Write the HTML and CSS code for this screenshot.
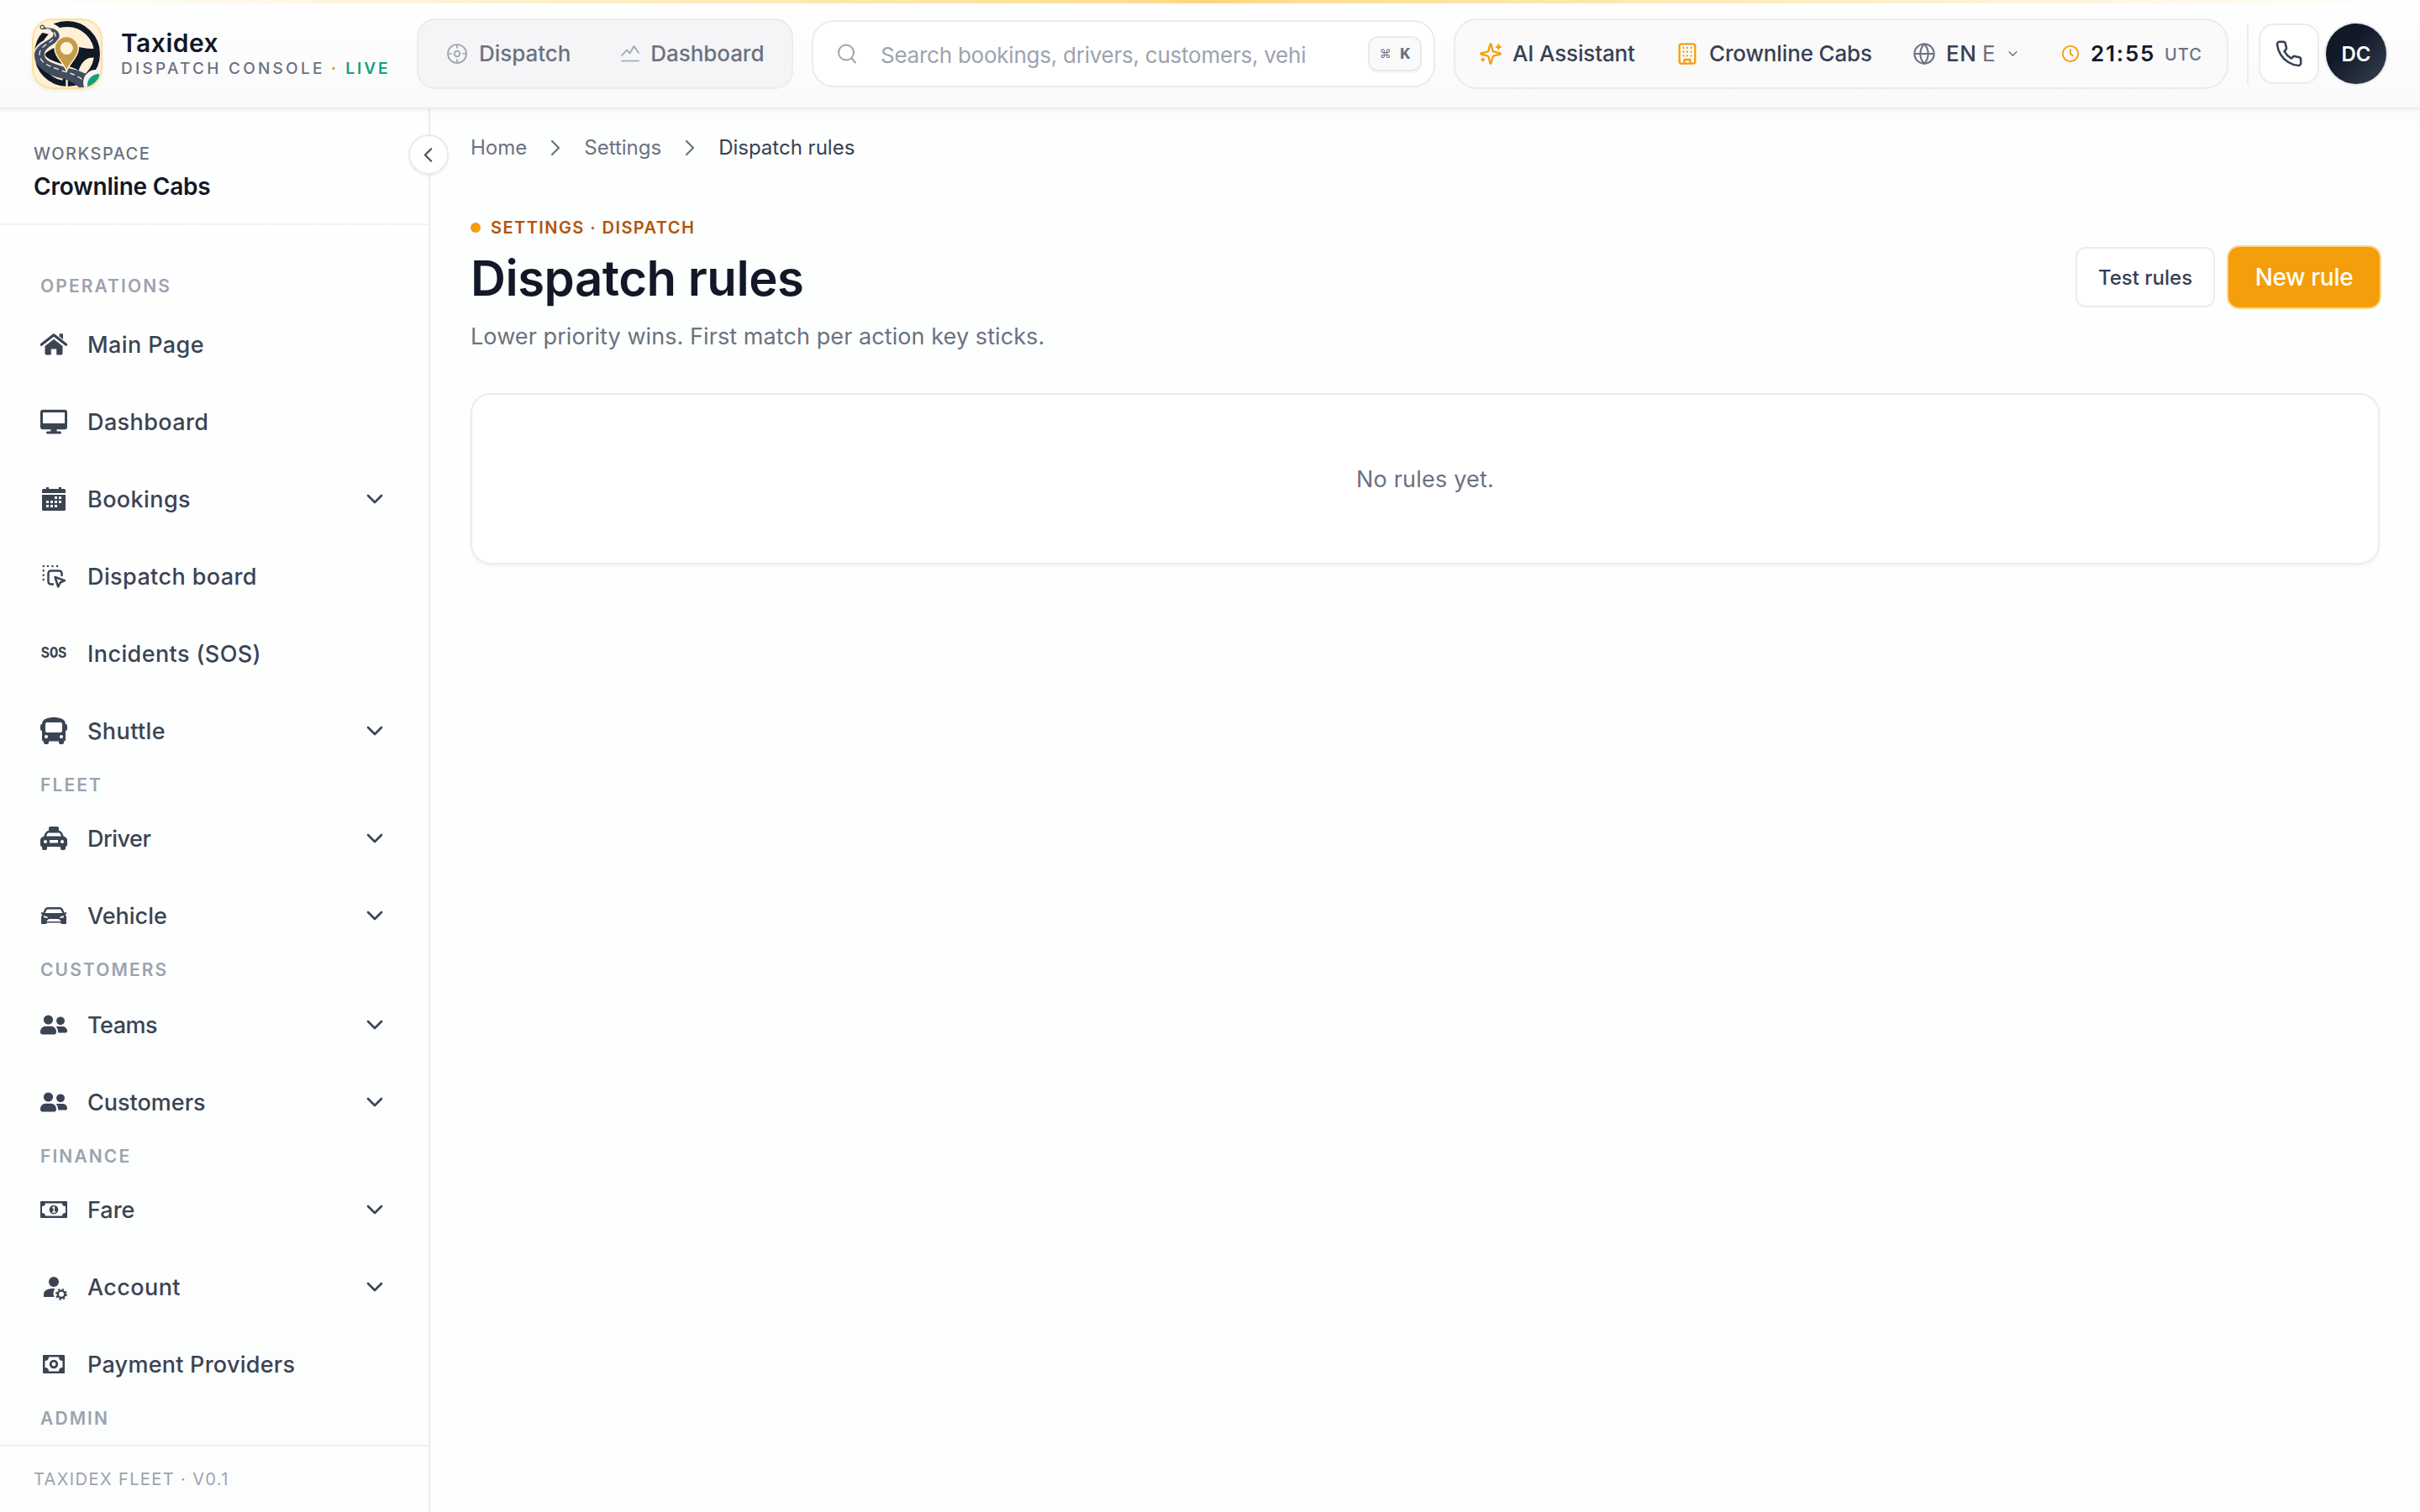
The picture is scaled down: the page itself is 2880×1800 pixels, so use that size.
FILE: index.html
```
<!DOCTYPE html>
<html lang="en">
<head>
<meta charset="utf-8">
<title>Dispatch rules · Taxidex</title>
<link rel="stylesheet" href="styles.css">
</head>
<body>
<svg class="defs" width="0" height="0" aria-hidden="true">
  <symbol id="chev-down" viewBox="0 0 20 12"><path d="M2 2l8 8 8-8" fill="none" stroke="currentColor" stroke-width="2.6" stroke-linecap="round" stroke-linejoin="round"/></symbol>
  <symbol id="chev-right" viewBox="0 0 12 20"><path d="M2 2l8 8-8 8" fill="none" stroke="currentColor" stroke-width="2.2" stroke-linecap="round" stroke-linejoin="round"/></symbol>
  <symbol id="people" viewBox="0 0 32 32"><circle cx="9.5" cy="10" r="5.6"/><circle cx="24" cy="11.3" r="4.9"/><path d="M0 24.5C0 20 3 17.7 6.5 17.7h6c3.500 0 6.500 2.300 6.500 6.800 0 2-1 2.900-2.500 2.900h-14C1 27.400 0 26.500 0 24.500zM18.500 18h8c3.500 0 5.500 2.500 5.500 5.500 0 1.200-.6 2-1.800 2H21.200c0-3-.8-5.500-2.700-7.500z"/></symbol>
</svg>

<header class="topbar">
  <div class="brand">
    <svg class="logo" viewBox="0 0 84 84">
      <defs><clipPath id="logo-clip"><rect x="1" y="1" width="82" height="82" rx="23"/></clipPath></defs>
      <rect x="1" y="1" width="82" height="82" rx="23" fill="#fff1d8"/>
      <g clip-path="url(#logo-clip)">
        <circle cx="42" cy="42" r="35.5" fill="none" stroke="#111927" stroke-width="7"/>
        <path fill="#111927" d="M7 38c9-3 18-4 24-3l22-1c8 0 15 4 27 1v12c-7-1-12-1-16 2-5 4-8 9-9 17H30c-1-9-5-16-23-18z"/>
        <path fill="#111927" d="M33 58h17l-2 21H36c2-7 0-13-3-21z"/>
        <path d="M41.500 60v22" stroke="#fff1d8" stroke-width="2.400"/>
        <path d="M12 10c12 2 19 5 18 12-1 8-20 9-21 20-1 13 20 17 32 21 10 3 18 8 24 17" fill="none" stroke="#fff1d8" stroke-width="13.500"/>
        <path d="M11 10L25 12c10 3 10 13 1 18-6 4-12 8-11 14 1 8 15 11 28 15 15 3 25 8 34 14l-18 12C52 77 43 73 34 71 17 67 4 57 3 45 2 31 21 27 25 21 28 16 21 13 11 12z" fill="#424c5c"/>
        <path d="M17 12.500c7 1 11 4 11 8-1 7-18 11-19 21-1 13 17 17 31 22 8 2 15 5 21 10" fill="none" stroke="#f4f4f4" stroke-width="1.300" stroke-dasharray="6 4"/>
        <circle cx="12.300" cy="10.300" r="2.200" fill="#fff1d8" stroke="#424c5c" stroke-width="1.200"/>
        <path fill="#c59c49" stroke="#fff1d8" stroke-width="1.500" d="M41.300 62.500C38 53 27 46 27 35.700a14.200 14.200 0 0 1 28.400 0C55.400 46 44.500 53 41.300 62.500z"/>
        <circle cx="41.300" cy="35.500" r="7.500" fill="#fff3de"/>
        <circle cx="76" cy="76" r="15" fill="#f3f4f6"/>
        <path fill="#12a375" d="M66 81c-1-8 5-15 14-15 1 8-5 15-14 15z"/>
      </g>
      <rect x="1" y="1" width="82" height="82" rx="23" fill="none" stroke="#fde09a" stroke-width="2"/>
    </svg>
    <div class="brand-text">
      <div class="brand-name">Taxidex</div>
      <div class="brand-sub">DISPATCH CONSOLE<span class="brand-dot">·</span><span class="brand-live">LIVE</span></div>
    </div>
  </div>

  <nav class="modes">
    <a class="mode mode-dispatch"><svg width="26" height="26" viewBox="0 0 26 26" fill="none" stroke="currentColor" stroke-width="1.700"><circle cx="13" cy="13" r="11"/><circle cx="13" cy="13" r="3.300"/><path d="M13 2v4.500M13 19.500V24M2 13h4.500M19.500 13H24"/></svg><span>Dispatch</span></a>
    <a class="mode"><svg width="22" height="22" viewBox="0 0 22 22" fill="none" stroke="currentColor" stroke-width="1.700" stroke-linecap="round" stroke-linejoin="round"><path d="M1 13l6-6.500 3.500 4L15.500 2 21 10M1 19.500h20"/></svg><span>Dashboard</span></a>
  </nav>

  <div class="search">
    <svg width="24" height="26" viewBox="0 0 24 26" fill="none" stroke="#9ca3af" stroke-width="2" stroke-linecap="round"><circle cx="11" cy="11.500" r="9"/><path d="M17.500 18.500l4.500 5"/></svg>
    <span class="placeholder">Search bookings, drivers, customers, vehi</span>
    <kbd class="keys"><span class="cmd">⌘</span><span>K</span></kbd>
  </div>

  <div class="tools">
    <a class="tool tool-ai"><svg class="amber" width="28" height="28" viewBox="0 0 24 24" fill="none" stroke="currentColor" stroke-width="2" stroke-linecap="round" stroke-linejoin="round"><path d="M9.937 15.500A2 2 0 0 0 8.500 14.063l-6.135-1.582a.5.5 0 0 1 0-.962L8.500 9.936A2 2 0 0 0 9.937 8.500l1.582-6.135a.5.5 0 0 1 .963 0L14.063 8.500A2 2 0 0 0 15.500 9.937l6.135 1.581a.5.5 0 0 1 0 .964L15.500 14.063a2 2 0 0 0-1.437 1.437l-1.582 6.135a.5.5 0 0 1-.963 0zM20 3v4M22 5h-4M4 17v2M5 18H3"/></svg><span>AI Assistant</span></a>
    <a class="tool tool-company"><svg class="amber" width="28" height="28" viewBox="0 0 24 24" fill="none" stroke="currentColor" stroke-width="2" stroke-linecap="round" stroke-linejoin="round"><rect x="4" y="2" width="16" height="20" rx="2"/><path d="M9 22v-4h6v4M8 6h.01M16 6h.01M12 6h.01M12 10h.01M12 14h.01M16 10h.01M16 14h.01M8 10h.01M8 14h.01"/></svg><span>Crownline Cabs</span></a>
    <a class="tool tool-lang"><svg class="grey" width="28" height="28" viewBox="0 0 24 24" fill="none" stroke="currentColor" stroke-width="1.800"><circle cx="12" cy="12" r="10"/><path d="M12 2a14.500 14.500 0 0 0 0 20 14.500 14.500 0 0 0 0-20M2 12h20"/></svg><span class="lang">EN</span><span class="lang-alt">E</span><svg class="tiny" width="11" height="8" viewBox="0 0 20 12"><use href="#chev-down"/></svg></a>
    <div class="tool tool-clock"><svg class="amber" width="22" height="22" viewBox="0 0 24 24" fill="none" stroke="currentColor" stroke-width="2" stroke-linecap="round"><circle cx="12" cy="12" r="10"/><path d="M12 6.500V12l3 2.500"/></svg><span class="time">21:55</span><span class="utc">UTC</span></div>
  </div>

  <div class="user">
    <a class="phone"><svg width="34" height="34" viewBox="0 0 24 24" fill="none" stroke="currentColor" stroke-width="1.800" stroke-linecap="round" stroke-linejoin="round"><path d="M22 16.920v3a2 2 0 0 1-2.180 2 19.790 19.790 0 0 1-8.630-3.070 19.500 19.500 0 0 1-6-6 19.790 19.790 0 0 1-3.070-8.670A2 2 0 0 1 4.110 2h3a2 2 0 0 1 2 1.720 12.840 12.840 0 0 0 .7 2.810 2 2 0 0 1-.45 2.110L8.090 9.910a16 16 0 0 0 6 6l1.270-1.270a2 2 0 0 1 2.110-.45 12.840 12.840 0 0 0 2.810.7A2 2 0 0 1 22 16.920z"/></svg></a>
    <div class="avatar">DC</div>
  </div>
</header>

<div class="shell">
  <aside class="sidebar">
    <div class="workspace">
      <div class="workspace-label">WORKSPACE</div>
      <div class="workspace-name">Crownline Cabs</div>
    </div>
    <nav class="menu">
      <div class="group group-first">OPERATIONS</div>
      <a class="item"><svg viewBox="0 0 32 32"><path d="M22.700 3.300H27V10l-4.300-3.600z"/><path d="M1.300 16.300L16 4.800l14.700 11.500" fill="none" stroke="currentColor" stroke-width="3.200" stroke-linecap="round" stroke-linejoin="round"/><path d="M5.500 18L16 9.800 26.500 18v8.800q0 1.700-1.700 1.700h-5.600v-7h-6.400v7H7.200q-1.700 0-1.700-1.700z"/></svg><span>Main Page</span></a>
      <a class="item"><svg viewBox="0 0 32 32"><path fill-rule="evenodd" d="M3 1.700h26a3 3 0 0 1 3 3v17.600a3 3 0 0 1-3 3H19.500v2.200h4a1.500 1.500 0 0 1 0 3h-15a1.500 1.500 0 0 1 0-3h4v-2.200H3a3 3 0 0 1-3-3V4.700a3 3 0 0 1 3-3zM3 5v13h26V5z"/></svg><span>Dashboard</span></a>
      <a class="item"><svg viewBox="0 0 32 32"><path fill-rule="evenodd" d="M2 5.500Q2 4 3.500 4H7V2h3v2h12V2h3v2h3.500Q30 4 30 5.500V9H2zM2 11h28v17.500q0 1.500-1.500 1.500h-25Q2 30 2 28.500zM17 13v3h3v-3zm5 0v3h3v-3zM7 18v3h3v-3zm5 0v3h3v-3zm5 0v3h3v-3zm5 0v3h3v-3zM7 23v3h3v-3zm5 0v3h3v-3zm5 0v3h3v-3z"/></svg><span>Bookings</span><svg class="caret"><use href="#chev-down"/></svg></a>
      <a class="item"><svg viewBox="0 0 32 32"><g fill="none" stroke="currentColor" stroke-width="2.500" stroke-linecap="round" stroke-linejoin="round"><path d="M3.700 4h.01M9 4h.01M14.500 4h.01M20 4h.01M3.700 9.300h.01M3.700 14.700h.01M3.700 20h.01"/><path d="M15 25.500h-2.500a3 3 0 0 1-3-3V12.500a3 3 0 0 1 3-3H22.500a3 3 0 0 1 3 3V15"/><path d="M17.500 17l11.500 4.200-5.200 2.300-2.600 5z"/></g></svg><span>Dispatch board</span></a>
      <a class="item"><b class="sos">SOS</b><span>Incidents (SOS)</span></a>
      <a class="item"><svg viewBox="0 0 32 32"><path fill-rule="evenodd" d="M2 8C2 2 9 0 16 0s14 2 14 8a2 2 0 0 1 2 2v4a2 2 0 0 1-2 2v11q0 1-2 1.500V30a2 2 0 0 1-2 2h-2a2 2 0 0 1-2-2v-1.500H10V30a2 2 0 0 1-2 2H6a2 2 0 0 1-2-2v-1.500Q2 28 2 27V16a2 2 0 0 1-2-2v-4a2 2 0 0 1 2-2zM8 6a2 2 0 0 0-2 2v8a2 2 0 0 0 2 2h16a2 2 0 0 0 2-2V8a2 2 0 0 0-2-2zM7 21a2 2 0 1 0 .01 0zM25 21a2 2 0 1 0 .01 0z"/></svg><span>Shuttle</span><svg class="caret"><use href="#chev-down"/></svg></a>
      <div class="group">FLEET</div>
      <a class="item item-tight"><svg viewBox="0 0 32 32"><path fill-rule="evenodd" d="M10 4a2 2 0 0 1 2-2h8a2 2 0 0 1 2 2v3c3 0 4 2 6 7 2 0 4 2 4 4v6q0 1.500-2 2v2a2 2 0 0 1-2 2h-2a2 2 0 0 1-2-2v-2H8v2a2 2 0 0 1-2 2H4a2 2 0 0 1-2-2v-2q-2-.5-2-2v-6c0-2 2-4 4-4 2-5 3-7 6-7zM9.500 9.500Q8.500 9.500 7 13.500h18q-1.500-4-2.500-4zM6 18a2 2 0 1 0 .01 0zM26 18a2 2 0 1 0 .01 0zM11 18v3.500h10V18z"/></svg><span>Driver</span><svg class="caret"><use href="#chev-down"/></svg></a>
      <a class="item item-snug"><svg viewBox="0 0 32 32"><path fill-rule="evenodd" d="M3.500 12.500C5 8 6 6 9.500 6h13C26 6 27 8 28.500 12.500l2.500-.5v2l-1.500 1q1.500 1 1.500 3v7q0 1-1 1h-5l-1-1.500H8L7 26H2q-1 0-1-1v-7q0-2 1.500-3L1 14v-2zM8 8.500L5.500 13h21L24 8.500zM4 16.300v2l5 .7q0-2-2-2.300zM28 16.300v2l-5 .7q0-2 2-2.300zM10 20l-3 3h18l-3-3z"/></svg><span>Vehicle</span><svg class="caret"><use href="#chev-down"/></svg></a>
      <div class="group group-loose">CUSTOMERS</div>
      <a class="item item-tight"><svg viewBox="0 0 32 32"><use href="#people"/></svg><span>Teams</span><svg class="caret"><use href="#chev-down"/></svg></a>
      <a class="item item-snug"><svg viewBox="0 0 32 32"><use href="#people"/></svg><span>Customers</span><svg class="caret"><use href="#chev-down"/></svg></a>
      <div class="group">FINANCE</div>
      <a class="item item-snug"><svg viewBox="0 0 32 32"><path fill-rule="evenodd" d="M1 6h30q1 0 1 1v18q0 1-1 1H1q-1 0-1-1V7q0-1 1-1zM6 8.500Q6 12 2 12v8q4 0 4 3.500h20Q26 20 30 20v-8q-4 0-4-3.500z"/><circle cx="16" cy="16" r="5.300"/><path d="M14.300 14l2-1v5.500M14 19h4.500" fill="none" stroke="#fff" stroke-width="1.500"/></svg><span>Fare</span><svg class="caret"><use href="#chev-down"/></svg></a>
      <a class="item"><svg viewBox="0 0 32 32"><circle cx="16" cy="10" r="6"/><path d="M4 28v-3c0-4.500 4.500-7 11-7h2.500a10 10 0 0 0-1 10z"/><circle cx="25" cy="24.800" r="4.200" fill="none" stroke="currentColor" stroke-width="2.400"/><circle cx="25" cy="24.800" r="6" fill="none" stroke="currentColor" stroke-width="1.900" stroke-dasharray="2.300 2.410"/></svg><span>Account</span><svg class="caret"><use href="#chev-down"/></svg></a>
      <a class="item item-wide"><svg viewBox="0 0 32 32"><path fill-rule="evenodd" d="M4 5h24q1 0 1 1v20q0 1-1 1H4q-1 0-1-1V6q0-1 1-1zM10 7.500Q10 12 5.500 12v8q4.500 0 4.500 4.500h12Q22 20 26.500 20v-8Q22 12 22 7.500z"/><circle cx="16" cy="16" r="3.800" fill="none" stroke="currentColor" stroke-width="2.800"/></svg><span>Payment Providers</span></a>
      <div class="group">ADMIN</div>
    </nav>
    <div class="sidebar-foot">TAXIDEX FLEET · V0.1</div>
    <button class="collapse"><svg width="11" height="19" viewBox="0 0 12 20"><path d="M10 2l-8 8 8 8" fill="none" stroke="currentColor" stroke-width="2.400" stroke-linecap="round" stroke-linejoin="round"/></svg></button>
  </aside>

  <main class="main">
    <div class="crumbs"><a>Home</a><svg><use href="#chev-right"/></svg><a>Settings</a><svg><use href="#chev-right"/></svg><span class="here">Dispatch rules</span></div>
    <div class="head">
      <div>
        <div class="eyebrow"><i class="dot"></i>SETTINGS · DISPATCH</div>
        <h1>Dispatch rules</h1>
        <p class="lede">Lower priority wins. First match per action key sticks.</p>
      </div>
      <div class="actions">
        <button class="btn">Test rules</button>
        <button class="btn btn-primary">New rule</button>
      </div>
    </div>
    <section class="card">No rules yet.</section>
  </main>
</div>
</body>
</html>
```
FILE: styles.css
```
* { box-sizing: border-box; }

body {
  margin: 0;
  width: 2880px;
  height: 1800px;
  overflow: hidden;
  display: flex;
  flex-direction: column;
  background: #fdfefe;
  color: #111827;
  font-family: Inter, "Noto Sans", sans-serif;
}

button { font-family: inherit; margin: 0; padding: 0; }
svg { flex: none; display: block; }
.defs { position: absolute; }

/* Top bar */
.topbar {
  position: relative;
  z-index: 2;
  flex: none;
  display: flex;
  align-items: center;
  height: 130px;
  padding-left: 38px;
  border-bottom: 2px solid #ebecef;
  background: linear-gradient(#fff, #fafafb);
  box-shadow: 0 2px 3px rgba(17, 24, 39, .04), 0 8px 24px rgba(17, 24, 39, .02);
}
.topbar::before {
  content: "";
  position: absolute;
  inset: 0 0 auto;
  height: 4px;
  background: linear-gradient(90deg, rgba(251, 191, 36, 0), #fddf94 46%, #fbd482 50%, #fddf94 54%, rgba(251, 191, 36, 0));
}
.brand { display: flex; align-items: center; width: 458px; }
.logo { width: 84px; height: 84px; margin-right: 22px; border-radius: 24px; box-shadow: 0 2px 4px rgba(17, 24, 39, .06); }
.brand-text { padding-top: 4px; white-space: nowrap; }
.brand-name { font-size: 30px; font-weight: 600; line-height: 32px; letter-spacing: .5px; }
.brand-sub { font-size: 19px; font-weight: 500; line-height: 30px; letter-spacing: 3.25px; color: #6b7280; }
.brand-dot { color: #f59e0b; font-weight: 700; margin: 0 8px 0 7px; }
.brand-live { color: #12a375; font-weight: 600; letter-spacing: 3px; }

.modes {
  display: flex;
  align-items: center;
  width: 448px;
  height: 84px;
  margin-right: 22px;
  padding-left: 33px;
  gap: 60px;
  border: 2px solid #ececef;
  border-radius: 22px;
  background: #f5f5f8;
}
.mode { display: flex; align-items: center; gap: 13px; font-size: 26px; font-weight: 500; letter-spacing: -.05px; color: #6b7280; }
.mode svg { color: #9ca3af; }
.mode span, .tool-ai span, .tool-company span, .lang, .lang-alt { padding-bottom: 2px; }

.search {
  display: flex;
  align-items: center;
  width: 742px;
  height: 80px;
  margin-right: 22px;
  padding: 0 14px 0 28px;
  border: 2px solid #ececee;
  border-radius: 26px;
  background: #fff;
}
.placeholder { margin-left: 28px; padding-top: 2px; font-size: 26px; letter-spacing: -.24px; color: #9ca3af; white-space: nowrap; }
.keys {
  display: flex;
  align-items: center;
  justify-content: center;
  gap: 10px;
  width: 64px;
  height: 42px;
  margin-left: auto;
  border: 2px solid #e9eaed;
  border-radius: 12px;
  background: #fafafa;
  box-shadow: 0 2px 1px rgba(17, 24, 39, .04);
  color: #6b7280;
  font: 700 21px "Liberation Mono", monospace;
}
.cmd { font-family: "DejaVu Sans", sans-serif; font-weight: 400; font-size: 14px; }

.tools {
  display: flex;
  align-items: center;
  width: 922px;
  height: 84px;
  padding-left: 28px;
  border: 2px solid #ececee;
  border-radius: 28px;
  background: #fafafb;
}
.tool { display: flex; align-items: center; font-size: 26px; font-weight: 500; color: #374151; white-space: nowrap; }
.tool-ai { width: 234px; gap: 12px; letter-spacing: -.15px; }
.tool-company { width: 282px; gap: 12px; letter-spacing: -.15px; }
.tool-lang { width: 177px; }
.lang { margin-left: 12px; width: 43px; letter-spacing: .5px; }
.lang-alt { color: #6b7280; font-weight: 400; width: 31px; }
.tiny { color: #6b7280; }
.amber { color: #f59e0b; }
.grey { color: #6b7280; }
.time { margin-left: 13px; width: 88px; padding-bottom: 1px; font-weight: 600; letter-spacing: 1.8px; color: #111827; }
.utc { padding-top: 2px; font-size: 20px; letter-spacing: 1px; color: #6b7280; }

.user {
  display: flex;
  align-items: center;
  gap: 8px;
  height: 72px;
  margin-left: 22px;
  padding-left: 12px;
  border-left: 2px solid #ebecee;
}
.phone {
  display: flex;
  align-items: center;
  justify-content: center;
  width: 72px;
  height: 72px;
  border: 2px solid #ececee;
  border-radius: 18px;
  background: #fff;
  color: #374151;
}
.avatar {
  display: flex;
  align-items: center;
  justify-content: center;
  width: 72px;
  height: 72px;
  border-radius: 50%;
  background: linear-gradient(135deg, #111827 35%, #374151);
  box-shadow: 0 0 0 2px #e9eaec;
  color: #fff;
  font-size: 24px;
  font-weight: 600;
}

/* Sidebar */
.shell { flex: 1; display: flex; min-height: 0; }
.sidebar {
  position: relative;
  display: flex;
  flex-direction: column;
  width: 512px;
  border-right: 2px solid #ebebed;
  background: linear-gradient(#fff, #fcfdfd);
}
.workspace { flex: none; height: 138px; padding: 38px 0 0 40px; border-bottom: 2px solid #f3f4f6; }
.workspace-label { font-size: 20px; font-weight: 500; line-height: 30px; letter-spacing: 1.45px; color: #6b7280; }
.workspace-name { margin-top: 4px; font-size: 28px; font-weight: 600; line-height: 40px; letter-spacing: -.2px; }
.collapse {
  position: absolute;
  top: 30px;
  right: -24px;
  display: flex;
  align-items: center;
  justify-content: center;
  width: 48px;
  height: 48px;
  padding-right: 2px;
  border: 2px solid #e9eaec;
  border-radius: 50%;
  background: #fff;
  box-shadow: 0 2px 3px rgba(17, 24, 39, .05);
  color: #4b5563;
}
.menu { flex: 1; min-height: 0; overflow: hidden; padding: 54px 54px 0 48px; }
.group { height: 36px; line-height: 38px; font-size: 21px; font-weight: 600; letter-spacing: 2.1px; color: #9ca3af; }
.group-first { height: 42px; }
.group-loose { height: 38px; }
.item { display: flex; align-items: center; height: 92px; font-size: 27px; font-weight: 500; letter-spacing: .4px; color: #3b4453; }
.item > svg { width: 32px; height: 32px; fill: currentColor; }
.item span { margin-left: 24px; }
.item-tight { letter-spacing: -.5px; }
.item-snug { letter-spacing: 0; }
.item-wide { letter-spacing: .25px; }
.item > .caret { width: 20px; height: 12px; margin-left: auto; fill: none; }
.sos { width: 32px; text-align: center; font: 700 17px/24px "Liberation Mono", monospace; letter-spacing: 0; transform: scaleY(1.18); }
.sidebar-foot { flex: none; height: 80px; padding-left: 40px; border-top: 2px solid #f0f1f3; font-size: 20px; line-height: 79px; letter-spacing: 1.4px; color: #9ca3af; }

/* Page */
.main { flex: 1; display: flex; flex-direction: column; padding: 30px 48px 0; }
.crumbs { display: flex; align-items: center; height: 31px; margin-bottom: 1px; font-size: 24px; color: #6b7280; }
.crumbs svg { width: 12px; height: 20px; margin: 0 28px; }
.here { color: #374151; }
.head { display: flex; justify-content: space-between; align-items: center; height: 228px; margin: 30px -2px 0 0; }
.eyebrow { display: flex; align-items: center; height: 36px; margin-top: 3px; font-size: 20px; font-weight: 600; letter-spacing: 1.44px; color: #b45309; }
.dot { width: 12px; height: 12px; margin-right: 12px; border-radius: 50%; background: #f59e0b; }
h1 { margin: 6px 0 0; font-size: 58px; font-weight: 600; line-height: 72px; letter-spacing: -.45px; }
.lede { margin: 12px 0 0; font-size: 27px; line-height: 44px; letter-spacing: .08px; color: #6b7280; }
.actions { display: flex; align-items: center; gap: 14px; padding-bottom: 12px; }
.btn { width: 166px; height: 72px; border: 2px solid #ebecee; border-radius: 12px; background: #fff; font-size: 24px; font-weight: 500; color: #374151; }
.btn-primary { width: 184px; height: 76px; border-color: #fcd88a; border-radius: 15px; background: #f59e0b; font-size: 28px; letter-spacing: -.3px; color: #fff; }
.card {
  display: flex;
  align-items: center;
  justify-content: center;
  height: 204px;
  margin-top: 18px;
  border: 2px solid #ececee;
  border-radius: 24px;
  background: #fff;
  box-shadow: 0 2px 4px rgba(17, 24, 39, .04);
  font-size: 27px;
  letter-spacing: .2px;
  color: #6b7280;
}
```
